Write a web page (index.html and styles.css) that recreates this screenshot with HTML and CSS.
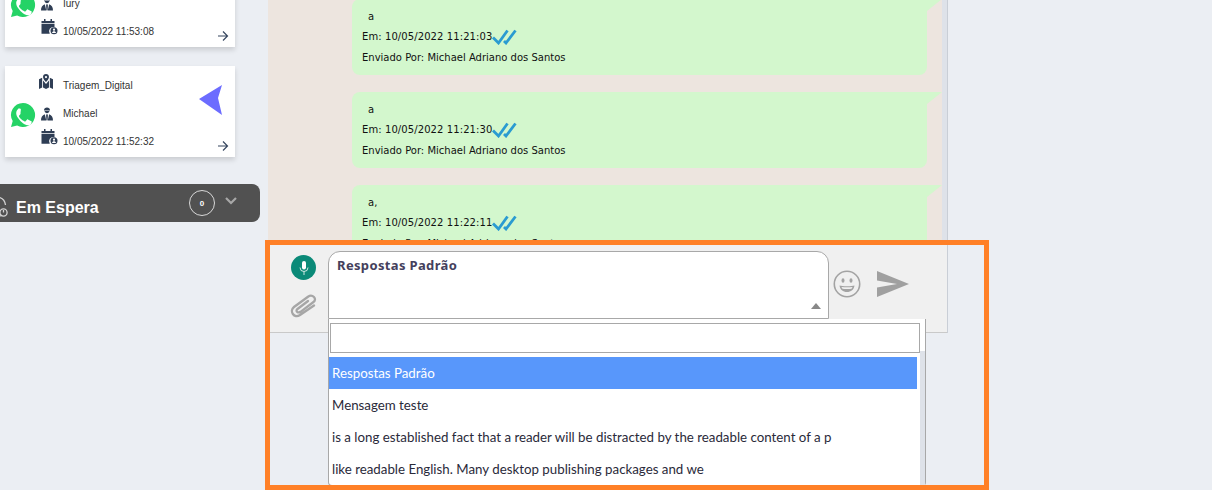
FILE: index.html
```html
<!DOCTYPE html>
<html lang="pt">
<head>
<meta charset="utf-8">
<title>Atendimento</title>
<link rel="stylesheet" href="styles.css">
</head>
<body>
<svg class="defs" width="0" height="0">
  <defs>
    <symbol id="wa" viewBox="0 0 26 26">
      <path fill="#25d366" d="M13 1a12 12 0 0 0-10.300 18.100L1 25l6.100-1.600A12 12 0 1 0 13 1z"/>
      <path fill="#fff" d="M9.300 6.600c-.3 0-.9.100-1.400.7-.5.600-1.700 1.600-1.700 3.900s1.700 4.500 1.900 4.800c.2.300 3.300 5.200 8.200 7 3 .9 4.200-.5 4.700-1.100.5-.6.800-1.800.7-2.300-.1-.3-.4-.5-.9-.7l-2.900-1.400c-.4-.2-.7-.2-1 .2l-1.300 1.600c-.2.300-.5.300-.9.100-.4-.2-1.800-.7-3.400-2.100-1.200-1.100-2.100-2.500-2.300-2.900-.2-.4 0-.6.200-.8l.9-1.100c.2-.3.300-.5.400-.8.100-.3.100-.6 0-.8L10.900 7.400c-.3-.7-.6-.8-.9-.8z"/>
    </symbol>
    <symbol id="person" viewBox="0 0 14 14">
      <path fill="#2f3e55" d="M4 3.400C4 1.600 5.300.6 7 .6s3 1 3 2.800zM4.600 4h4.800c-.2 1.400-1.100 2.200-2.400 2.200S4.800 5.400 4.600 4z"/>
      <path fill="#2f3e55" d="M1 13.400c0-3 1.300-5.300 3.800-6.200l1.500 6.200zM13 13.400c0-3-1.300-5.300-3.800-6.200l-1.500 6.200zM6.400 7.200h1.200l.3 1.200-.3 4.900H6.400l-.3-4.900z"/>
    </symbol>
    <symbol id="cal" viewBox="0 0 17 16">
      <path fill="#2f3e55" d="M3 0h1.500v2h5V0H11v2h2.500v2H.5V2H3zM.5 4.800h13v3.400a4.300 4.300 0 0 0-4.700 6.600H.5z"/>
      <circle cx="13" cy="11.800" r="3.500" fill="#2f3e55"/>
      <circle cx="13" cy="10.700" r="1.100" fill="#fff"/>
      <path fill="#fff" d="M11 14c.2-1.100 1-1.700 2-1.700s1.800.6 2 1.700z"/>
    </symbol>
    <symbol id="arrow" viewBox="0 0 12 12">
      <path fill="none" stroke="#36465f" stroke-width="1.200" d="M1 6h9.200M6 1.500 10.500 6 6 10.500"/>
    </symbol>
    <symbol id="map" viewBox="0 0 15 16">
      <path fill="#2f3e55" d="M0 5.500 3.400 4v10.500L0 16zM15 5.500 11.600 4v10.500L15 16zM7.500 0c2 0 3.200 1.400 3.200 3.100 0 2-1.800 3.800-3.200 5.500-1.400-1.700-3.200-3.500-3.200-5.500C4.300 1.400 5.500 0 7.500 0zM4.300 7l3.200 3.700L10.700 7v7.500l-3.200 1.500-3.200-1.500z"/>
      <circle cx="7.500" cy="3.200" r="1.200" fill="#fff"/>
    </symbol>
    <symbol id="checks" viewBox="0 0 26 16">
      <path fill="none" stroke="#2a9bd1" stroke-width="2.800" d="M1 8.500 6.500 14 15.500 1.500M12 12l2 2 9.500-12.500"/>
    </symbol>
  </defs>
</svg>

<div class="page">
  <aside class="sidebar">
    <section class="card card-first">
      <div class="wa-col"><svg class="wa"><use href="#wa"/></svg></div>
      <div class="card-rows">
        <div class="row"><svg class="ico-map"><use href="#map"/></svg><span>Triagem_Digital</span></div>
        <div class="row"><svg class="ico-person"><use href="#person"/></svg><span>Iury</span></div>
        <div class="row"><svg class="ico-cal"><use href="#cal"/></svg><span>10/05/2022 11:53:08</span></div>
      </div>
      <svg class="go"><use href="#arrow"/></svg>
    </section>
    <section class="card">
      <div class="wa-col"><svg class="wa"><use href="#wa"/></svg></div>
      <div class="card-rows">
        <div class="row"><svg class="ico-map"><use href="#map"/></svg><span>Triagem_Digital</span></div>
        <div class="row"><svg class="ico-person"><use href="#person"/></svg><span>Michael</span></div>
        <div class="row"><svg class="ico-cal"><use href="#cal"/></svg><span>10/05/2022 11:52:32</span></div>
      </div>
      <svg class="pointer" viewBox="0 0 24 30"><path fill="#6c6cff" d="M0 14 23 0l-4 13 4 17z"/></svg>
      <svg class="go"><use href="#arrow"/></svg>
    </section>
    <div class="waiting">
      <svg class="clock" viewBox="0 0 20 24"><path fill="none" stroke="#d4d4d4" stroke-width="1.300" d="M0 2.500c3 1 5 3.500 5.500 7.500M-1 21c1 0 2 0 3-.5"/><circle cx="3.500" cy="17.500" r="3.600" fill="none" stroke="#d4d4d4" stroke-width="1.300"/><path stroke="#d4d4d4" stroke-width="1.300" d="M3.500 15v2.500"/></svg>
      <span class="waiting-label">Em Espera</span>
      <span class="waiting-count">0</span>
      <svg class="chev" viewBox="0 0 12 8"><path fill="none" stroke="#a8a8a8" stroke-width="2.200" d="M1 1l5 5 5-5"/></svg>
    </div>
  </aside>

  <main class="chat">
    <div class="messages">
      <article class="bubble bubble-first">
        <p class="msg-text">a</p>
        <p class="msg-meta msg-date">Em: 10/05/2022 11:21:03<svg class="checks"><use href="#checks"/></svg></p>
        <p class="msg-meta">Enviado Por: Michael Adriano dos Santos</p>
      </article>
      <article class="bubble">
        <p class="msg-text">a</p>
        <p class="msg-meta msg-date">Em: 10/05/2022 11:21:30<svg class="checks"><use href="#checks"/></svg></p>
        <p class="msg-meta">Enviado Por: Michael Adriano dos Santos</p>
      </article>
      <article class="bubble">
        <p class="msg-text">a,</p>
        <p class="msg-meta msg-date">Em: 10/05/2022 11:22:11<svg class="checks"><use href="#checks"/></svg></p>
        <p class="msg-meta">Enviado Por: Michael Adriano dos Santos</p>
      </article>
    </div>
    <div class="composer">
      <div class="tools">
        <span class="mic"><svg viewBox="0 0 14 16" width="14" height="16"><path fill="#fff" d="M7 1a2 2 0 0 1 2 2v4.500a2 2 0 0 1-4 0V3a2 2 0 0 1 2-2z"/><path fill="none" stroke="#cfe8e3" stroke-width="1" d="M3 7.500a4 4 0 0 0 8 0M7 11.500V15"/></svg></span>
        <svg class="clip" viewBox="0 0 28 24"><path fill="none" stroke="#a6a6a6" stroke-width="2.300" stroke-linecap="round" d="M18 7 7.500 15c-2.500 2 .5 4.500 3 2.800L23.500 8c4-3-1-8.500-5.500-5.300L4 13c-5 4 0 12 6 8l14-9.500"/></svg>
      </div>
      <div class="select-box">
        <span class="select-value">Respostas Padrão</span>
        <span class="caret"></span>
      </div>
      <svg class="smile" viewBox="0 0 28 28"><circle cx="14" cy="14" r="12.700" fill="none" stroke="#a3a3a3" stroke-width="1.600"/><ellipse cx="10" cy="10.500" rx="1.500" ry="2.300" fill="#a3a3a3"/><ellipse cx="18" cy="10.500" rx="1.500" ry="2.300" fill="#a3a3a3"/><path fill="#a3a3a3" d="M6.500 15.500c2.500 1 12.500 1 15 0-.5 4.300-3.500 6.500-7.500 6.500s-7-2.200-7.500-6.500z"/><path fill="#f0f0f0" d="M8.500 16.900c3 .5 8 .5 11 0-.3.800-.6 1.400-1 1.900-2.500.3-6.500.3-9 0-.4-.5-.7-1.100-1-1.900z"/></svg>
      <svg class="send" viewBox="0 0 32 26"><path fill="#a0a0a0" d="M0 0 32 13 0 26v-9.500L20 13 0 9.500z"/></svg>
    </div>
  </main>

  <div class="dropdown">
    <div class="search"></div>
    <ul class="options">
      <li class="opt opt-active">Respostas Padrão</li>
      <li class="opt">Mensagem teste</li>
      <li class="opt">is a long established fact that a reader will be distracted by the readable content of a p</li>
      <li class="opt">like readable English. Many desktop publishing packages and we</li>
    </ul>
    <span class="drop-scroll"></span>
  </div>
  <div class="highlight"></div>
</div>
</body>
</html>
```
FILE: styles.css
```css
* { box-sizing: border-box; }
html, body { margin: 0; padding: 0; height: 100%; overflow: hidden; }
body { background: #ebeef3; font-family: "Liberation Sans", Arial, sans-serif; }
.defs { position: absolute; }
.page { position: relative; width: 1212px; height: 490px; overflow: hidden; display: flex; align-items: flex-start; }

/* sidebar */
.sidebar { width: 268px; flex: none; display: flex; flex-direction: column; }
.card { position: relative; width: 230px; height: 91px; margin: 0 0 19px 5px; background: #fff; box-shadow: 0 3px 5px rgba(0,0,0,.14); display: flex; align-items: stretch; }
.card-first { margin-top: -44px; }
.wa-col { width: 34px; flex: none; display: flex; align-items: flex-end; padding: 0 0 29px 5px; }
.wa { width: 26px; height: 26px; display: block; }
.card-rows { flex: 1; display: flex; flex-direction: column; padding-top: 5px; }
.row { position: relative; height: 28px; display: flex; align-items: center; font-size: 10px; color: #333; }
.row span { margin-left: 24px; }
.ico-map { width: 14px; height: 15px; position: absolute; left: 0; top: 3px; }
.ico-person { width: 14px; height: 14px; position: absolute; left: 1px; top: 8px; }
.ico-cal { width: 17px; height: 16px; position: absolute; left: 2px; top: 2px; }
.go { position: absolute; right: 6px; bottom: 5px; width: 12px; height: 12px; }
.pointer { position: absolute; left: 194px; top: 19px; width: 24px; height: 30px; }
.waiting { width: 260px; height: 38px; margin-top: 8px; background: #515151; border-radius: 0 8px 8px 0; display: flex; align-items: center; color: #fff; position: relative; }
.clock { position: absolute; left: 0; top: 11px; width: 20px; height: 24px; }
.waiting-label { margin: 10px 0 0 16px; font-size: 16px; font-weight: 700; width: 173px; }
.waiting-count { width: 26px; height: 26px; border: 1.500px solid #d8d8d8; border-radius: 50%; font-size: 8px; font-weight: 700; display: flex; align-items: center; justify-content: center; }
.chev { width: 12px; height: 8px; margin: -4px 0 0 10px; }

/* chat */
.chat { width: 680px; height: 333px; flex: none; display: flex; flex-direction: column; background: #ede5df; border-right: 1px solid #c9ced6; position: relative; }
.messages { height: 245px; overflow: hidden; padding: 0 0 0 84px; border-right: 5px solid #dee2e9; flex: none; }
.bubble { position: relative; width: 575px; height: 76px; margin-bottom: 17px; background: #d3f7cd; border-radius: 8px 0 8px 8px; padding: 8px 10px 0; font-family: "DejaVu Sans", sans-serif; font-size: 10px; color: #111; }
.bubble-first { margin-top: -1px; }
.bubble::after { content: ""; position: absolute; left: 100%; top: 0; width: 0; height: 0; border-top: 12px solid #d3f7cd; border-right: 15px solid transparent; }
.msg-text { margin: 0 0 0 6px; height: 19px; line-height: 19px; }
.msg-meta { margin: 0; height: 21px; line-height: 21px; display: flex; align-items: center; }
.msg-date { letter-spacing: .09px; }
.checks { width: 26px; height: 16px; }

.composer { flex: 1; background: #f0f0f0; border-bottom: 1px solid #c9c9c9; display: flex; align-items: flex-start; padding: 6px 0 0 22px; }
.tools { width: 38px; flex: none; display: flex; flex-direction: column; align-items: flex-start; gap: 14px; padding-top: 4px; }
.mic { width: 25px; height: 25px; margin-left: 1px; border-radius: 50%; background: #0b8a78; display: flex; align-items: center; justify-content: center; }
.clip { width: 28px; height: 24px; }
.select-box { width: 501px; height: 68px; flex: none; background: #fff; border: 1px solid #a8a8a8; border-radius: 12px 12px 0 0; position: relative; padding: 4px 8px; }
.select-value { font-family: "Noto Sans", sans-serif; font-size: 13px; font-weight: 700; letter-spacing: .35px; color: #44405c; }
.caret { position: absolute; right: 7px; bottom: 9px; width: 0; height: 0; border-left: 5px solid transparent; border-right: 5px solid transparent; border-bottom: 6px solid #888; }
.smile { width: 28px; height: 28px; margin: 19px 0 0 4px; flex: none; }
.send { width: 32px; height: 26px; margin: 20px 0 0 16px; flex: none; }

/* open dropdown */
.dropdown { position: absolute; left: 328px; top: 319px; width: 598px; height: 167px; background: #fff; border: solid #a8a8a8; border-width: 0 1px 1px 1px; border-radius: 0 0 4px 4px; padding: 4px 0 0 1px; font-family: Lato, sans-serif; font-size: 13.3px; color: #2a2a3a; }
.search { width: 590px; height: 30px; border: 1px solid #a8a8a8; background: #fff; }
.options { list-style: none; margin: 4px 0 0 -1px; padding: 0; width: 588px; }
.opt { height: 32px; line-height: 32px; padding-left: 3px; white-space: nowrap; }
.opt-active { background: #5897fb; color: #fff; }
.drop-scroll { position: absolute; right: 0; top: 32px; bottom: 0; width: 5px; background: #dee2e9; }

/* annotation */
.highlight { position: absolute; left: 265px; top: 240px; width: 724px; height: 250px; border: 5px solid #ff8027; pointer-events: none; }
```
